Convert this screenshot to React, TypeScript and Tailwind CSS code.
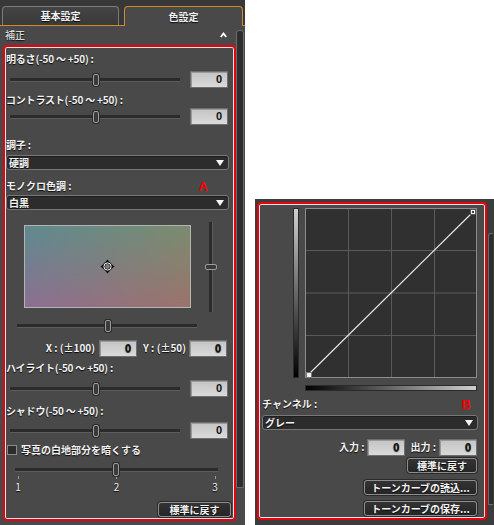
import React from "react";

const txt =
  "font-['Noto_Sans_CJK_JP','Noto_Sans',sans-serif] text-[10px] font-bold leading-none text-[#f2f2f2] [text-shadow:0_1px_1px_rgba(0,0,0,0.9)]";

function Tri() {
  return (
    <svg width="8" height="6" viewBox="0 0 8 6" className="shrink-0">
      <polygon points="0,0 8,0 4,6" fill="#f4f4f4" />
    </svg>
  );
}

function NumBox({ cls }: { cls: string }) {
  return (
    <div
      className={
        "h-[17px] w-[38px] bg-[linear-gradient(to_bottom,#c4c4c4,#dadada)] border border-[#6e6e6e] shadow-[inset_1px_1px_0_#9a9a9a] flex items-center justify-end pr-[5px] font-['Liberation_Sans',sans-serif] text-[11px] font-bold text-[#111] leading-none " +
        cls
      }
    >
      0
    </div>
  );
}

function Thumb({ cls }: { cls: string }) {
  return (
    <div
      className={
        "absolute w-[6px] h-[12px] rounded-[2px] bg-[#3a3a3a] border border-[#9c9c9c] shadow-[0_0_0_1px_#2a2a2a] " +
        cls
      }
    />
  );
}

function Track() {
  return <div className="w-full h-[4px] bg-[#2b2b2b] border-b border-[#5c5c5c]" />;
}

function SliderRow({ mt }: { mt: string }) {
  return (
    <div className={"flex items-center h-[17px] " + mt}>
      <div className="relative ml-[4px] w-[170px] h-[12px] flex items-center">
        <Track />
        <Thumb cls="left-[83px] top-0" />
      </div>
      <NumBox cls="ml-auto mr-[3px]" />
    </div>
  );
}

function Label({ children, mt }: { children: React.ReactNode; mt: string }) {
  return <div className={"h-[14px] flex items-center tracking-[-0.2px] " + mt + " " + txt}>{children}</div>;
}

function Select({ value, mt, mr }: { value: string; mt: string; mr: string }) {
  return (
    <div
      className={
        "h-[15px] flex items-center justify-between bg-[#2c2c2c] border border-[#787878] rounded-[3px] pl-[2px] pr-[4px] shadow-[inset_0_1px_0_#1e1e1e] " +
        mt +
        " " +
        mr +
        " " +
        txt
      }
    >
      <span>{value}</span>
      <Tri />
    </div>
  );
}

function Btn({ label, cls }: { label: string; cls: string }) {
  return (
    <div
      className={
        "h-[15px] flex items-center justify-center bg-[linear-gradient(to_bottom,#333,#262626)] border border-[#8e8e8e] rounded-[3px] shadow-[0_0_0_1px_#2a2a2a] " +
        cls +
        " " +
        txt
      }
    >
      {label}
    </div>
  );
}

function ColorPad() {
  return (
    <svg width="167" height="83" viewBox="0 0 167 83" className="block">
      <defs>
        <linearGradient id="top" x1="0" y1="0" x2="1" y2="0">
          <stop offset="0" stopColor="#5e8b90" />
          <stop offset="1" stopColor="#7b8c6f" />
        </linearGradient>
        <linearGradient id="bot" x1="0" y1="0" x2="1" y2="0">
          <stop offset="0" stopColor="#8c6f92" />
          <stop offset="1" stopColor="#9c736b" />
        </linearGradient>
        <linearGradient id="fade" x1="0" y1="0" x2="0" y2="1">
          <stop offset="0" stopColor="#fff" stopOpacity="0" />
          <stop offset="1" stopColor="#fff" stopOpacity="1" />
        </linearGradient>
        <mask id="m">
          <rect width="167" height="83" fill="url(#fade)" />
        </mask>
      </defs>
      <rect width="167" height="83" fill="url(#top)" />
      <rect width="167" height="83" fill="url(#bot)" mask="url(#m)" />
      <rect x="0.5" y="0.5" width="166" height="82" fill="none" stroke="#b4b4b4" />
      <g transform="translate(83.5 41.5)">
        <circle r="3.6" fill="none" stroke="#111" strokeWidth="2.4" />
        <circle r="3.6" fill="none" stroke="#fff" strokeWidth="1" />
        <polygon points="0,-7 -2,-4.5 2,-4.5" fill="#111" />
        <polygon points="0,7 -2,4.5 2,4.5" fill="#111" />
        <polygon points="-7,0 -4.5,-2 -4.5,2" fill="#111" />
        <polygon points="7,0 4.5,-2 4.5,2" fill="#111" />
      </g>
    </svg>
  );
}

function Curve() {
  return (
    <svg width="172" height="170" viewBox="0 0 172 170" className="block">
      <rect width="172" height="170" fill="#303030" />
      {[43, 86, 129].map((x) => (
        <line key={"x" + x} x1={x + 0.5} y1="0" x2={x + 0.5} y2="170" stroke="#5a5a5a" />
      ))}
      {[42.5, 85, 127.5].map((y) => (
        <line key={"y" + y} x1="0" y1={y} x2="172" y2={y} stroke="#5a5a5a" />
      ))}
      <rect x="0.5" y="0.5" width="171" height="169" fill="none" stroke="#8c8c8c" />
      <line x1="4" y1="166" x2="168" y2="4" stroke="#e6e6e6" strokeWidth="1.2" />
      <rect x="1.5" y="164.5" width="5" height="5" fill="#f0f0f0" stroke="#777" />
      <rect x="165.5" y="1.5" width="5" height="5" fill="#f0f0f0" stroke="#555" />
      <rect x="167" y="3" width="2" height="2" fill="#444" />
    </svg>
  );
}

function LeftPanel() {
  return (
    <div className="w-[245px] h-[525px] bg-[#494949] flex flex-col shrink-0">
      <div className="h-[26px] bg-[#383838] flex items-end border-b border-[#d38a2c]">
        <div
          className={
            "ml-[2px] w-[117px] h-[19px] border border-b-0 border-[#7c7c7c] rounded-t-[4px] bg-[linear-gradient(to_bottom,#444,#3a3a3a)] flex items-center justify-center " +
            txt +
            " text-[#d6d6d6]"
          }
        >
          基本設定
        </div>
        <div
          className={
            "ml-[5px] w-[119px] h-[20px] -mb-px border border-b-0 border-[#d38a2c] rounded-t-[4px] bg-[#494949] flex items-center justify-center " +
            txt +
            " text-[#e6e6e6]"
          }
        >
          色設定
        </div>
      </div>
      <div className="flex flex-1">
        <div className="w-[236px] flex flex-col">
          <div className="h-[18px] flex items-center justify-between pl-[5px] pr-[9px]">
            <span className={txt + " font-normal"}>補正</span>
            <svg width="7" height="6" viewBox="0 0 7 6">
              <polyline points="0.8,5 3.5,1.5 6.2,5" fill="none" stroke="#fff" strokeWidth="1.8" />
            </svg>
          </div>
          <div className="ml-[3px] mt-[1px] w-[233px] h-[476px] border-2 border-[#e8000c] rounded-[4px] shadow-[inset_0_0_0_1px_#e6e6e6] pl-[1px] pr-[3px] flex flex-col">
            <Label mt="mt-[5px]">明るさ(-50 ～ +50) :</Label>
            <SliderRow mt="mt-[5px]" />
            <Label mt="mt-[5px]">コントラスト(-50 ～ +50) :</Label>
            <SliderRow mt="mt-[1px]" />
            <Label mt="mt-[13px]">調子 :</Label>
            <Select value="硬調" mt="mt-[3px]" mr="mr-[2px]" />
            <div className={"h-[14px] mt-[9px] flex items-center " + txt}>
              <span>モノクロ色調 :</span>
              <span className="ml-auto mr-[23px] font-['Liberation_Sans',sans-serif] text-[13px] font-bold text-[#ff0000] [text-shadow:none]">
                A
              </span>
            </div>
            <Select value="白黒" mt="mt-[2px]" mr="mr-[2px]" />
            <div className="mt-[12px] h-[90px] flex">
              <div className="ml-[18px] mt-[3px]">
                <ColorPad />
              </div>
              <div className="relative ml-[14px] w-[12px] h-[90px] flex justify-center">
                <div className="w-[4px] h-full bg-[#2b2b2b] border-r border-[#5c5c5c]" />
                <div className="absolute left-0 top-[42px] w-[12px] h-[6px] rounded-[2px] bg-[#3a3a3a] border border-[#9c9c9c]" />
              </div>
            </div>
            <div className="mt-[8px] h-[12px] relative ml-[11px] w-[180px] flex items-center">
              <Track />
              <Thumb cls="left-[88px] top-0" />
            </div>
            <div className={"mt-[8px] h-[16px] flex items-center justify-end " + txt}>
              <span>X : (±100)</span>
              <NumBox cls="ml-[4px] w-[37px] h-[16px]" />
              <span className="ml-[6px]">Y : (±50)</span>
              <NumBox cls="ml-[3px] w-[37px] h-[16px] mr-[4px]" />
            </div>
            <Label mt="mt-[5px]">ハイライト(-50 ～ +50) :</Label>
            <SliderRow mt="mt-[5px]" />
            <Label mt="mt-[7px]">シャドウ(-50 ～ +50) :</Label>
            <SliderRow mt="mt-[4px]" />
            <div className={"mt-[5px] h-[12px] flex items-center " + txt}>
              <div className="ml-[1px] w-[10px] h-[10px] bg-[#2d2d2d] border border-[#8a8a8a]" />
              <span className="ml-[4px]">写真の白地部分を暗くする</span>
            </div>
            <div className="mt-[7px] h-[13px] relative ml-[9px] w-[203px] flex items-center">
              <Track />
              <Thumb cls="left-[98px] top-0 h-[13px]" />
            </div>
            <div className="h-[3px] ml-[8px] w-[205px] flex justify-between">
              <div className="w-[8px] flex justify-center"><div className="w-[1px] h-[3px] bg-[#9a9a9a]" /></div>
              <div className="w-[8px] flex justify-center"><div className="w-[1px] h-[3px] bg-[#9a9a9a]" /></div>
              <div className="w-[8px] flex justify-center"><div className="w-[1px] h-[3px] bg-[#9a9a9a]" /></div>
            </div>
            <div className={"mt-[2px] h-[12px] ml-[8px] w-[205px] flex justify-between items-center " + txt + " font-normal font-['Liberation_Sans',sans-serif] text-[#d8d8d8]"}>
              <div className="w-[8px] text-center">1</div>
              <div className="w-[8px] text-center">2</div>
              <div className="w-[8px] text-center">3</div>
            </div>
            <div className="mt-[9px] flex justify-end">
              <Btn label="標準に戻す" cls="w-[73px]" />
            </div>
          </div>
        </div>
        <div className="mt-[4px] w-[8px] h-[458px] bg-[#2e2e2e] border border-[#6c6c6c] rounded-t-[3px]" />
      </div>
    </div>
  );
}

function RightPanel() {
  return (
    <div className="ml-[10px] mt-[199px] w-[239px] h-[326px] bg-[#3c3c3c] flex shrink-0">
      <div className="ml-[2px] mt-[3px] w-[230px] h-[318px] bg-[#494949] border-2 border-[#e8000c] rounded-[4px] shadow-[inset_0_0_0_1px_#e6e6e6] pl-[3px] pr-[7px] pt-[4px] flex flex-col">
        <div className="flex">
          <div className="ml-[31px] w-[6px] h-[170px] bg-[linear-gradient(to_bottom,#cfcfcf,#000)] border border-[#2a2a2a]" />
          <div className="ml-[6px]">
            <Curve />
          </div>
        </div>
        <div className="mt-[7px] ml-[43px] w-[172px] h-[6px] bg-[linear-gradient(to_right,#000,#cfcfcf)] border border-[#2a2a2a]" />
        <div className={"mt-[6px] h-[14px] flex items-center " + txt}>
          <span>チャンネル :</span>
          <span className="ml-auto mr-[7px] font-['Liberation_Sans',sans-serif] text-[13px] font-bold text-[#ff0000] [text-shadow:none]">
            B
          </span>
        </div>
        <Select value="グレー" mt="mt-[4px]" mr="mr-0" />
        <div className={"mt-[9px] h-[16px] flex items-center justify-end " + txt}>
          <span>入力 :</span>
          <NumBox cls="ml-[3px] h-[16px]" />
          <span className="ml-[5px]">出力 :</span>
          <NumBox cls="ml-[3px] h-[16px] mr-[1px]" />
        </div>
        <div className="mt-[3px] flex justify-end pr-[1px]">
          <Btn label="標準に戻す" cls="w-[70px]" />
        </div>
        <div className="mt-[7px] flex justify-end pr-[1px]">
          <Btn label="トーンカーブの読込..." cls="w-[113px]" />
        </div>
        <div className="mt-[6px] flex justify-end pr-[1px]">
          <Btn label="トーンカーブの保存..." cls="w-[113px]" />
        </div>
      </div>
      <div className="ml-[1px] mt-[34px] w-[5px] h-[272px] bg-[#2e2e2e] border border-[#6c6c6c] border-r-0 rounded-tl-[3px]" />
    </div>
  );
}

export default function App() {
  return (
    <div className="w-[494px] h-[525px] bg-white flex overflow-hidden">
      <LeftPanel />
      <RightPanel />
    </div>
  );
}
